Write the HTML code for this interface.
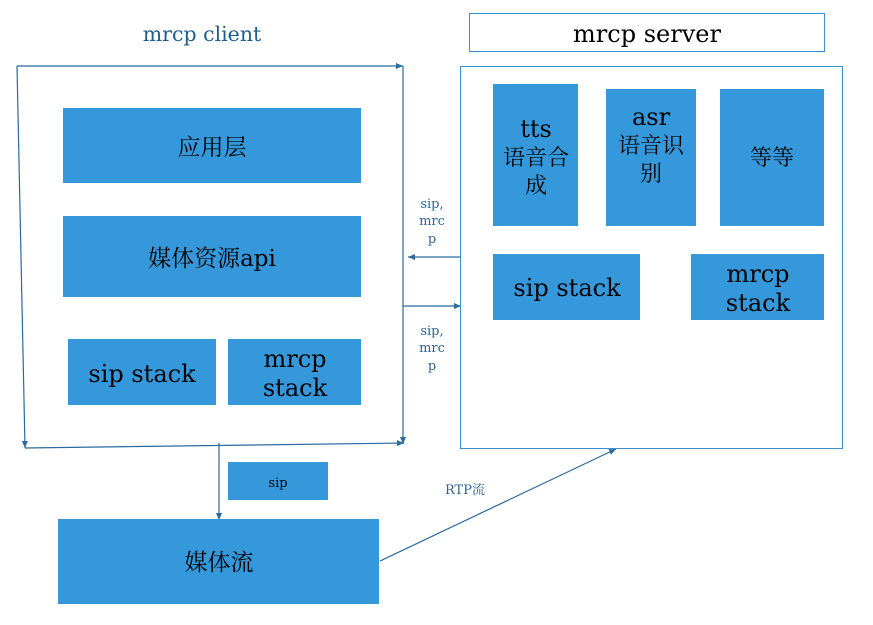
<!DOCTYPE html>
<html><head><meta charset="utf-8"><style>
html,body{margin:0;padding:0;background:#fff;}
svg{display:block;}
text{font-family:"DejaVu Serif","Liberation Serif","Noto Serif CJK SC",serif;}
</style></head><body>
<svg width="873" height="625" viewBox="0 0 873 625" xmlns="http://www.w3.org/2000/svg">
<defs>
<marker id="a" markerWidth="8" markerHeight="8" refX="7" refY="4" orient="auto" markerUnits="userSpaceOnUse">
<path d="M0,1 L7,4 L0,7 z" fill="#2a6a9e"/></marker>
</defs>
<text x="202" y="41" font-size="20.5" fill="#1f5f8f" text-anchor="middle">mrcp client</text>
<g stroke="#2a6a9e" stroke-width="1.2" fill="none">
<line x1="17" y1="66" x2="403" y2="66" marker-end="url(#a)"/>
<line x1="403" y1="66" x2="403" y2="444" marker-end="url(#a)"/>
<line x1="25" y1="448" x2="404" y2="443" marker-end="url(#a)"/>
<line x1="17" y1="66" x2="25" y2="448" marker-end="url(#a)"/>
<line x1="460" y1="257" x2="408" y2="257" marker-end="url(#a)"/>
<line x1="403" y1="306" x2="461" y2="306" marker-end="url(#a)"/>
<line x1="219" y1="443" x2="219" y2="520" marker-end="url(#a)"/>
<line x1="380" y1="561" x2="616" y2="449" marker-end="url(#a)"/>
</g>
<g fill="#3498db">
<rect x="63" y="108" width="298" height="75"/>
<rect x="63" y="216" width="298" height="81"/>
<rect x="68" y="339" width="148" height="66"/>
<rect x="228" y="339" width="133" height="66"/>
<rect x="493" y="84" width="85" height="142"/>
<rect x="606" y="89" width="90" height="137"/>
<rect x="720" y="89" width="104" height="137"/>
<rect x="493" y="254" width="147" height="66"/>
<rect x="691" y="254" width="133" height="66"/>
<rect x="228" y="462" width="100" height="38"/>
<rect x="58" y="519" width="321" height="85"/>
</g>
<rect x="469.5" y="13.5" width="355" height="38" fill="none" stroke="#3a8fd0" stroke-width="1"/>
<rect x="460.5" y="66.5" width="382" height="382" fill="none" stroke="#3a8fd0" stroke-width="1"/>
<g fill="#000" text-anchor="middle">
<text x="647" y="42" font-size="24">mrcp server</text>
<text x="212" y="155" font-size="23">应用层</text>
<text x="212" y="266" font-size="23">媒体资源api</text>
<text x="142" y="382" font-size="24">sip stack</text>
<text x="295" y="367" font-size="24">mrcp</text>
<text x="295" y="396" font-size="24">stack</text>
<text x="536" y="137" font-size="24">tts</text>
<text x="536" y="165" font-size="22">语音合</text>
<text x="536" y="193" font-size="22">成</text>
<text x="651" y="125" font-size="24">asr</text>
<text x="651" y="153" font-size="22">语音识</text>
<text x="651" y="181" font-size="22">别</text>
<text x="772" y="165" font-size="22">等等</text>
<text x="567" y="296" font-size="24">sip stack</text>
<text x="758" y="282" font-size="24">mrcp</text>
<text x="758" y="311" font-size="24">stack</text>
<text x="278" y="487" font-size="13">sip</text>
<text x="219" y="570" font-size="23">媒体流</text>
</g>
<g fill="#2d6496" text-anchor="middle" font-size="13">
<text x="432" y="208">sip,</text>
<text x="432" y="225">mrc</text>
<text x="432" y="243">p</text>
<text x="432" y="335">sip,</text>
<text x="432" y="352">mrc</text>
<text x="432" y="370">p</text>
<text x="465" y="494">RTP流</text>
</g>
</svg>
</body></html>
